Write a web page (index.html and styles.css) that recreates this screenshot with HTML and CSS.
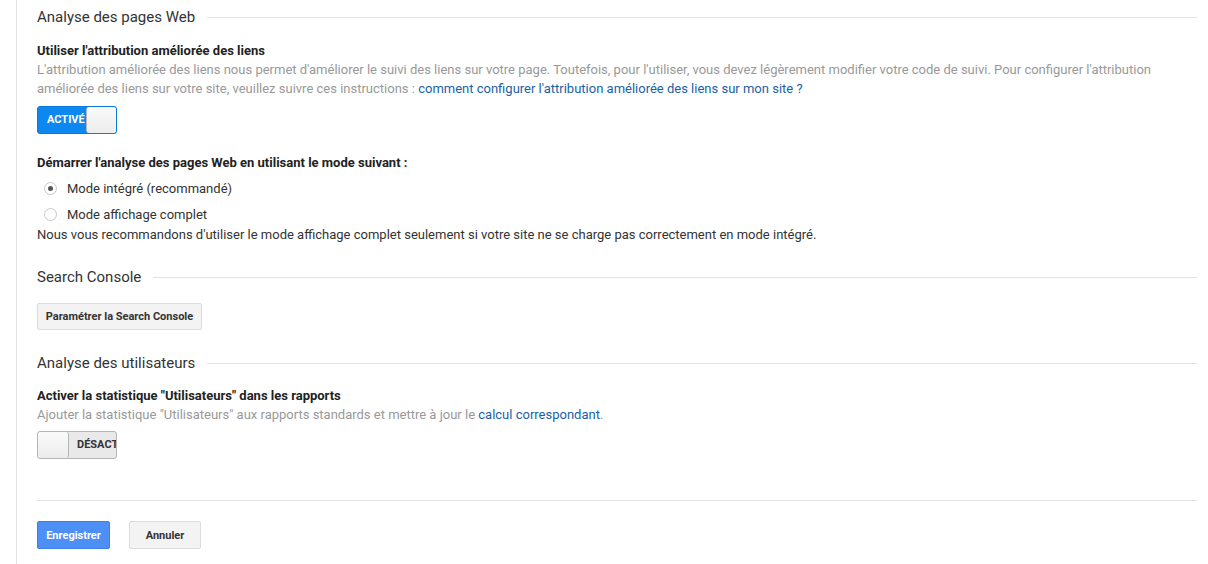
FILE: index.html
```html
<!DOCTYPE html>
<html lang="fr">
<head>
<meta charset="utf-8">
<link rel="stylesheet" href="styles.css">
</head>
<body>
<div class="panel">
  <div class="section-head"><span>Analyse des pages Web</span><i class="rule"></i></div>
  <div class="field f1">
    <div class="label">Utiliser l'attribution améliorée des liens</div>
    <div class="desc">L'attribution améliorée des liens nous permet d'améliorer le suivi des liens sur votre page. Toutefois, pour l'utiliser, vous devez légèrement modifier votre code de suivi. Pour configurer l'attribution améliorée des liens sur votre site, veuillez suivre ces instructions : <a href="#">comment configurer l'attribution améliorée des liens sur mon site ?</a></div>
    <div class="toggle on"><span class="tlabel">ACTIVÉ</span><span class="knob"></span></div>
  </div>
  <div class="field f2">
    <div class="label">Démarrer l'analyse des pages Web en utilisant le mode suivant :</div>
    <div class="radios">
      <label class="radio"><span class="dot checked"></span>Mode intégré (recommandé)</label>
      <label class="radio"><span class="dot"></span>Mode affichage complet</label>
    </div>
    <div class="note">Nous vous recommandons d'utiliser le mode affichage complet seulement si votre site ne se charge pas correctement en mode intégré.</div>
  </div>
  <div class="section-head s2"><span>Search Console</span><i class="rule"></i></div>
  <button class="btn sc">Paramétrer la Search Console</button>
  <div class="section-head s3"><span>Analyse des utilisateurs</span><i class="rule"></i></div>
  <div class="field f3">
    <div class="label">Activer la statistique "Utilisateurs" dans les rapports</div>
    <div class="desc">Ajouter la statistique "Utilisateurs" aux rapports standards et mettre à jour le <a href="#">calcul correspondant</a>.</div>
    <div class="toggle off"><span class="knob"></span><span class="tlabel">DÉSACTIVÉ</span></div>
  </div>
  <div class="footer">
    <button class="btn primary">Enregistrer</button>
    <button class="btn">Annuler</button>
  </div>
</div>
</body>
</html>
```
FILE: styles.css
```css
html, body {
  margin: 0;
  padding: 0;
  background: #fff;
}
body {
  font-family: Roboto, "Liberation Sans", Arial, sans-serif;
  color: #333;
  font-size: 13px;
}
.panel {
  margin-left: 16px;
  border-left: 1px solid #e3e3e3;
  padding: 7px 11px 20px 20px;
  min-height: 537px;
}
.section-head {
  display: flex;
  align-items: center;
  font-size: 15px;
  line-height: 20px;
  color: #333;
}
.section-head .rule {
  flex: 1;
  border-top: 1px solid #e3e3e3;
  margin-left: 12px;
  margin-top: 1px;
}
.field { margin-top: 15px; }
.label {
  font-weight: bold;
  line-height: 18px;
  color: #222;
}
.desc {
  color: #999;
  line-height: 19px;
}
.desc a {
  color: #1a5fa8;
  text-decoration: none;
}
.toggle {
  display: flex;
  width: 80px;
  height: 28px;
  margin-top: 8px;
  border-radius: 3px;
  overflow: hidden;
  box-sizing: border-box;
  font-size: 11px;
  font-weight: bold;
  white-space: nowrap;
}
.toggle.on {
  background: #0d88f0;
  border: 1px solid #0b7bdc;
}
.toggle.on .tlabel {
  width: 48px;
  flex: none;
  color: #fff;
  line-height: 26px;
  padding-left: 9px;
  box-sizing: border-box;
  overflow: hidden;
}
.knob {
  flex: none;
  width: 31px;
  height: 26px;
  background: linear-gradient(#fafafa, #ececec);
  border-left: 1px solid #b5b5b5;
  border-radius: 3px;
  box-sizing: border-box;
}
.toggle.off {
  background: #e9e9e9;
  border: 1px solid #b5b5b5;
}
.toggle.off .knob {
  border-left: 0;
  border-right: 1px solid #b5b5b5;
}
.toggle.off .tlabel {
  color: #333;
  line-height: 26px;
  padding-left: 8px;
  overflow: hidden;
}
.f2 { margin-top: 20px; }
.radios { margin-top: 3px; }
.radio {
  display: flex;
  align-items: center;
  height: 26px;
  color: #333;
}
.dot {
  width: 13px;
  height: 13px;
  margin-left: 7px;
  margin-right: 10px;
  border: 1px solid #c8c8c8;
  border-radius: 50%;
  box-sizing: border-box;
  display: flex;
  align-items: center;
  justify-content: center;
}
.dot.checked::after {
  content: "";
  width: 5px;
  height: 5px;
  border-radius: 50%;
  background: #555;
}
.note {
  line-height: 16px;
  color: #333;
}
.s2 { margin-top: 24px; }
.btn {
  font-family: Roboto, "Liberation Sans", Arial, sans-serif;
  font-size: 11px;
  font-weight: bold;
  color: #333;
  height: 28px;
  padding: 0 8px;
  background: #f3f3f3;
  border: 1px solid #dcdcdc;
  border-radius: 2px;
  white-space: nowrap;
  cursor: pointer;
}
.sc {
  display: block;
  margin-top: 16px;
  width: 165px;
  height: 27px;
  padding: 0;
}
.s3 { margin-top: 23px; }
.f3 { margin-top: 14px; }
.f3 .toggle { margin-top: 7px; }
.footer {
  margin-top: 41px;
  border-top: 1px solid #e3e3e3;
  padding-top: 20px;
  display: flex;
  gap: 19px;
}
.footer .btn { width: 72px; }
.btn.primary {
  width: 73px;
  background: #4d8ff5;
  border-color: #3c7fe8;
  color: #fff;
}
```
